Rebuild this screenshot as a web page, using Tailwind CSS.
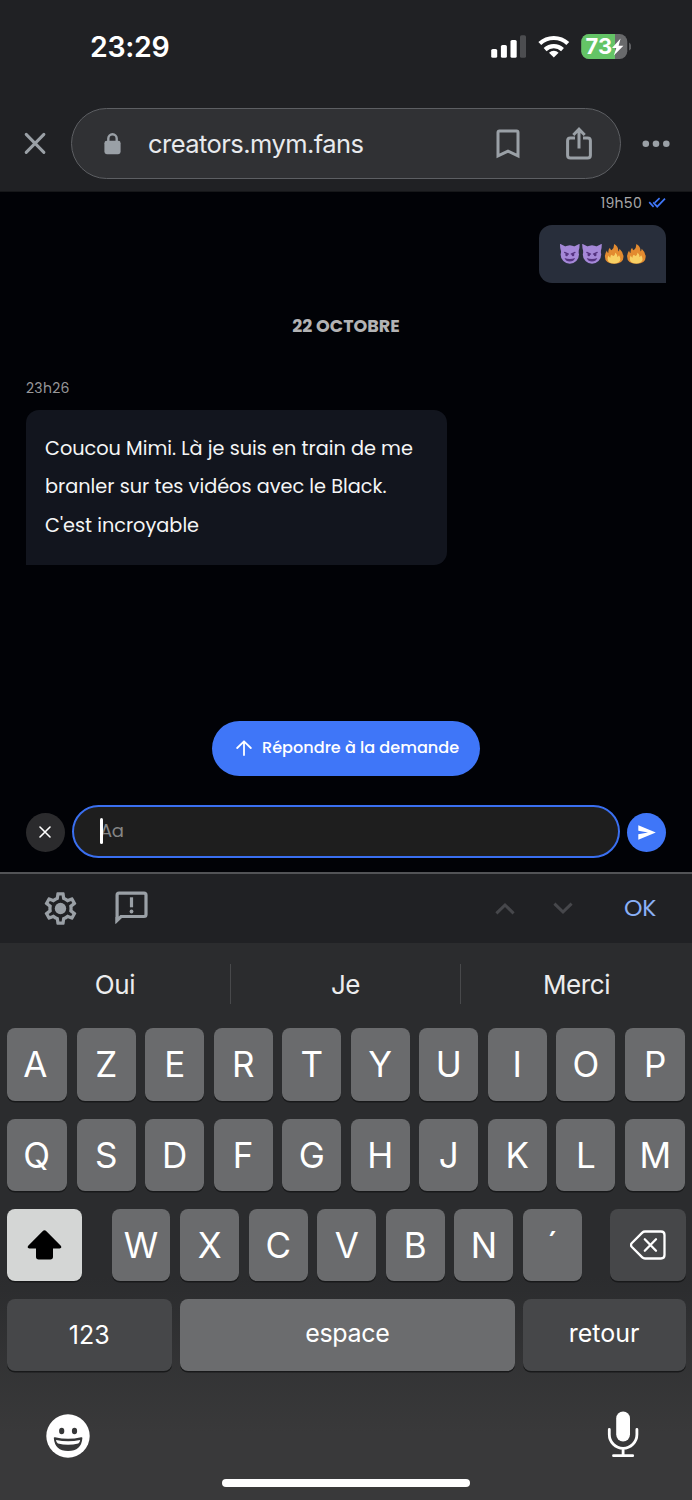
<!DOCTYPE html>
<html lang="fr">
<head>
<meta charset="utf-8">
<title>creators.mym.fans</title>
<script src="https://cdn.jsdelivr.net/npm/@tailwindcss/browser@4"></script>
</head>
<body class="bg-black">
<div class="flex h-[1500px] w-[692px] flex-col overflow-hidden font-['Inter','Liberation_Sans',sans-serif] text-white">

  <!-- Status bar and address bar -->
  <header class="flex h-[192px] shrink-0 flex-col border-b border-[#161719] bg-[#202124]">
    <div class="flex h-[108px] items-start justify-between pr-[61px] pl-[90px]">
      <span class="mt-[27px] text-[28.5px] leading-[40px] font-semibold tracking-[-0.3px]">23:29</span>
      <svg class="mt-[30px] h-[34px] w-[141px]" viewBox="490 30 141 34">
        <g fill="#fff"><rect x="491.2" y="49" width="6" height="8.8" rx="1.6"/><rect x="500.9" y="45" width="6" height="12.8" rx="1.6"/><rect x="510.5" y="40" width="6.2" height="17.8" rx="1.6"/></g>
        <rect x="520" y="35.3" width="6" height="22.5" rx="1.6" fill="#4c4d50"/>
        <g fill="none" stroke="#fff" stroke-width="4.2"><path d="M539.8 43.6a20.3 20.3 0 0 1 28 0"/><path d="M545.1 49.6a12.8 12.8 0 0 1 17.4 0"/></g>
        <path d="M553.8 57.6l-4.8-4.9a7 7 0 0 1 9.6 0z" fill="#fff"/>
        <clipPath id="bat"><rect x="581.3" y="34" width="46" height="25" rx="7.8"/></clipPath>
        <g clip-path="url(#bat)"><rect x="581" y="34" width="47" height="25" fill="#68696b"/><rect x="581" y="34" width="34" height="25" fill="#64c466"/></g>
        <path d="M629 42.6c3.200 1.6 3.200 6.4 0 8z" fill="#5c5d60"/>
        <text x="585.6" y="54.200" font-size="21.500" font-weight="700" fill="#fff" textLength="26.500" lengthAdjust="spacingAndGlyphs">73</text>
        <path d="M620.6 38.600l-8.600 9.300h4.300l-2.500 7.600 9.600-9.800h-4.800z" fill="#fff"/>
      </svg>
    </div>
    <div class="flex items-center">
      <svg class="ml-[23px] h-6 w-6" viewBox="0 0 24 24" fill="none" stroke="#9aa0a6" stroke-width="3" stroke-linecap="round"><path d="M3.2 2.4l17.7 18M20.9 2.4l-17.7 18"/></svg>
      <div class="ml-6 flex h-[71px] w-[550px] items-center rounded-full border-[1.5px] border-[#5d5f63] bg-[#303134]">
        <svg class="ml-[32px] h-[22px] w-[17px]" viewBox="0 0 17 22"><path d="M4.3 9V5.5a4.2 4.2 0 0 1 8.4 0V9" fill="none" stroke="#9aa0a6" stroke-width="2.4"/><rect x=".4" y="7.8" width="16.2" height="13.4" rx="2.4" fill="#9aa0a6"/></svg>
        <span class="ml-[27px] w-[348px] text-[25.5px] leading-[40px] tracking-[-0.55px] text-[#e8eaed]">creators.mym.fans</span>
        <svg class="h-[30px] w-[24px] shrink-0" viewBox="0 0 24 30" fill="none" stroke="#9aa0a6" stroke-width="3"><path d="M2 26.8V3.4Q2 2 3.4 2h17.2Q22 2 22 3.4v23.4l-10-4.6z"/></svg>
        <svg class="ml-[45px] h-[34px] w-[28px] shrink-0" viewBox="0 0 28 34" fill="none" stroke="#9aa0a6" stroke-width="3"><path d="M10 11H5.4Q2.6 11 2.6 13.8v14.4Q2.6 31 5.4 31h17.2q2.8 0 2.8-2.8V13.800q0-2.8-2.8-2.8H18"/><path d="M14 21.4V2.5M8.3 8L14 2.2 19.700 8"/></svg>
      </div>
      <svg class="ml-[21px] h-2 w-7" viewBox="0 0 28 8" fill="#9aa0a6"><circle cx="3.800" cy="3.700" r="3.3"/><circle cx="14" cy="3.700" r="3.3"/><circle cx="24.300" cy="3.700" r="3.3"/></svg>
    </div>
  </header>

  <!-- Conversation -->
  <main class="flex h-[680px] shrink-0 flex-col bg-[#010206] font-['Poppins','Inter',sans-serif]">
    <div class="flex h-[21px] items-center justify-end pr-[26px]">
      <span class="text-[14px] leading-[20px] tracking-[0.3px] text-[#a9a9aa]">19h50</span>
      <svg class="ml-[6px] h-3 w-[18px]" viewBox="0 0 18 12" fill="none" stroke="#3f76f8" stroke-width="1.7"><path d="M1.200 5.200l4.400 4.600M5.200 5.400l4 4.300 7.800-8M6.900 5.600l4.700-4.400"/></svg>
    </div>
    <div class="mt-[12px] mr-[26px] flex h-[58px] w-[127.500px] items-center justify-center self-end rounded-[13px] rounded-br-none bg-[#282e3b]">
      <svg class="ml-px h-[22px] w-[88px]" viewBox="0 0 88 22">
        <defs>
          <g id="imp"><path d="M.4 1.100Q.1.500.9.800l5.500 2.700-4.600 6Q.2 5 .4 1.100zM20 1.100q.3-.6-.5-.3L14 3.500l4.600 6Q20.200 5 20 1.100z" fill="#a588d8"/><circle cx="10.200" cy="11.300" r="9.200" fill="#a588d8"/><path d="M5 9.200l3.800 1.700M15.400 9.200l-3.800 1.700" stroke="#553380" stroke-width="1.200" stroke-linecap="round"/><ellipse cx="7" cy="11.500" rx="1.300" ry="1.600" fill="#553380"/><ellipse cx="13.400" cy="11.500" rx="1.300" ry="1.600" fill="#553380"/><path d="M4.900 14.700q5.300 2.300 10.600 0-1.300 3.600-5.300 3.600t-5.300-3.600z" fill="#553380"/></g>
          <g id="fire"><path d="M10 .7q4.500 2.400 4 7.500 1.200-.6 1.300-2.700 3.700 3.300 4 8 .1 7-9.300 7T.7 13.200q0-3 2-6 .2 2 1.500 2.500-.4-3.500 1.500-5.200.3 1.900 1.600 2.500Q10 4.800 10 .7z" fill="#e38b30"/><path d="M11 9.300q2.500 2 1.900 4.400 1.500-.2 1.900-1.600 3 4.700-.5 7-1.600 1.200-4.300 1.200-6.800 0-6.600-5 .1-1.600 1-2.900.5 1.900 1.800 2.100-.3-2.500 1.500-2.900.4 1 1.400 1.300 2.100-1.200 1.900-3.600z" fill="#f8d064"/></g>
        </defs>
        <use href="#imp" x=".6" y=".2"/><use href="#imp" x="22.800" y=".2"/><use href="#fire" x="45.200" y=".2"/><use href="#fire" x="67.400" y=".2"/>
      </svg>
    </div>
    <div class="mt-[30.500px] text-center text-[17.500px] leading-[24px] font-bold text-[#b3b3b4]">22 OCTOBRE</div>
    <div class="mt-[40px] ml-[26px] text-[14px] leading-[20px] tracking-[0.3px] text-[#98989a]">23h26</div>
    <div class="mt-[12.500px] ml-[26px] h-[154.500px] w-[421px] rounded-[13px] rounded-bl-none bg-[#12151e] pt-[19.500px] pl-[19px] text-[19.300px] leading-[38.500px] whitespace-nowrap text-[#f5f5f6]">
      <p>Coucou Mimi. Là je suis en train de me</p>
      <p>branler sur tes vidéos avec le Black.</p>
      <p>C'est incroyable</p>
    </div>
    <button class="mt-[156.500px] flex h-[55px] w-[268px] items-center self-center rounded-full bg-[#3f76f8] pb-[1px] pl-[24px]">
      <svg class="h-4 w-4" viewBox="0 0 16 16" fill="none" stroke="#fff" stroke-width="1.800" stroke-linecap="round" stroke-linejoin="round"><path d="M8 15V1.500M1.200 8L8 1.300 14.800 8"/></svg>
      <span class="ml-[10px] text-[16.100px] leading-[24px] font-medium whitespace-nowrap">Répondre à la demande</span>
    </button>
    <div class="mt-[29px] flex items-center pl-[25.500px]">
      <div class="mt-px flex size-[39px] items-center justify-center rounded-full bg-[#2b2b2d]">
        <svg class="size-[12px]" viewBox="0 0 12 12" stroke="#fff" stroke-width="1.600" stroke-linecap="round"><path d="M1 1l10 10M11 1L1 11"/></svg>
      </div>
      <div class="ml-[7.500px] flex h-[53px] w-[547.500px] items-center rounded-full border-2 border-[#3a6ff0] bg-[#1e1e1e] pb-px pl-[26px]">
        <span class="z-10 h-[26px] w-[3px] rounded-full bg-white"></span>
        <span class="-ml-[3px] text-[18px] leading-[28px] tracking-[-0.400px] text-[#858585]">Aa</span>
      </div>
      <div class="mt-px ml-[7.500px] flex size-[39px] items-center justify-center rounded-full bg-[#3f76f8]">
        <svg class="h-[15px] w-[18px]" viewBox="0 0 18 15" fill="#fff"><path d="M.3.300L17.800 7.500.3 14.700V9.300l9.700-1.800L.3 5.700z"/></svg>
      </div>
    </div>
  </main>

  <!-- Input accessory bar -->
  <div class="flex h-[71px] shrink-0 items-center border-t-2 border-[#525356] bg-[#202124] pb-px">
    <svg class="ml-[41px] size-[39px]" viewBox="0 0 24 24"><path fill="#9aa0a6" d="M19.430 12.980c.04-.32.07-.64.07-.98 0-.34-.03-.66-.07-.98l2.110-1.650c.19-.15.24-.42.120-.64l-2-3.460c-.09-.16-.26-.25-.44-.25-.06 0-.12.010-.17.030l-2.490 1c-.52-.4-1.080-.73-1.690-.98l-.38-2.650C14.460 2.180 14.250 2 14 2h-4c-.25 0-.46.180-.49.420l-.38 2.650c-.61.250-1.170.590-1.690.980l-2.490-1c-.06-.02-.12-.03-.18-.03-.17 0-.34.090-.43.250l-2 3.460c-.13.220-.07.490.120.640l2.110 1.650c-.04.320-.07.650-.07.980 0 .33.030.66.070.980l-2.110 1.650c-.19.150-.24.420-.12.640l2 3.460c.09.160.26.250.44.250.06 0 .12-.01.17-.03l2.490-1c.52.400 1.080.730 1.690.980l.38 2.650c.03.240.24.420.49.420h4c.25 0 .46-.18.49-.42l.38-2.650c.61-.25 1.170-.59 1.690-.98l2.490 1c.06.020.12.030.18.030.17 0 .34-.09.43-.25l2-3.460c.12-.22.07-.49-.12-.64l-2.110-1.650zm-1.980-1.710c.04.310.05.520.05.730 0 .21-.02.430-.05.730l-.14 1.130.89.700 1.080.840-.7 1.210-1.270-.51-1.040-.42-.9.680c-.43.320-.84.560-1.250.730l-1.060.43-.16 1.130-.2 1.350h-1.400l-.19-1.350-.16-1.130-1.060-.43c-.43-.18-.83-.41-1.230-.71l-.91-.7-1.060.43-1.270.51-.7-1.210 1.080-.84.890-.7-.14-1.130c-.03-.31-.05-.54-.05-.74s.02-.43.05-.73l.14-1.130-.89-.7-1.080-.84.7-1.210 1.270.51 1.040.42.9-.68c.43-.32.840-.56 1.250-.73l1.060-.43.160-1.130.2-1.350h1.390l.19 1.350.160 1.130 1.060.43c.43.180.83.410 1.230.71l.91.700 1.060-.43 1.270-.51.700 1.210-1.070.85-.89.700.140 1.130z"/><circle cx="12" cy="12" r="3.500" fill="#9aa0a6"/></svg>
    <svg class="ml-[35px] h-[34px] w-[33px]" viewBox="0 0 33 34"><path d="M2.100 29.300V4Q2.100 2.100 4 2.100h25q2 0 2 1.900v19.500q0 2-2 2H6z" fill="none" stroke="#9aa0a6" stroke-width="3.200"/><path d="M.5 26v7l6-6z" fill="#9aa0a6"/><path d="M14.900 6.300h3.200v10h-3.200z" fill="#9aa0a6"/><circle cx="16.500" cy="20.500" r="1.900" fill="#9aa0a6"/></svg>
    <svg class="ml-[347px] h-[13px] w-5" viewBox="0 0 20 13" fill="none" stroke="#46474b" stroke-width="3"><path d="M1.400 11.400L10 3l8.600 8.400"/></svg>
    <svg class="ml-[38px] h-[13px] w-5" viewBox="0 0 20 13" fill="none" stroke="#46474b" stroke-width="3"><path d="M1.400 1.600L10 10l8.600-8.400"/></svg>
    <span class="ml-[51px] pb-px font-['Poppins','Inter',sans-serif] text-[23.500px] leading-[30px] tracking-[-0.300px] text-[#8ab0f6]">OK</span>
  </div>

  <!-- Keyboard -->
  <section class="flex h-[557px] shrink-0 flex-col bg-linear-to-b from-[#2b2c2e] from-60% to-[#39393a] to-88%">
    <div class="mb-[3px] grid h-[82px] grid-cols-[230px_231px_231px] items-center text-center text-[26px] leading-[40px] tracking-[-0.400px] text-[#ececed]">
      <span class="pt-[2px]">Oui</span><span class="h-[40px] border-x border-[#48494b] leading-[42px]">Je</span><span class="pt-[2px]">Merci</span>
    </div>
    <div class="grid h-[73px] grid-cols-[60.500px_58.700px_58.700px_58.700px_58.700px_58.700px_58.700px_58.700px_58.700px_60.500px] justify-between px-[6.500px] text-center text-[35px] leading-[73px] *:rounded-[8px] *:bg-[#6a6b6d] *:shadow-[0_1.500px_0_#18191a]">
      <kbd class="pr-[3px] font-[inherit]">A</kbd><kbd class="font-[inherit]">Z</kbd><kbd class="font-[inherit]">E</kbd><kbd class="font-[inherit]">R</kbd><kbd class="font-[inherit]">T</kbd><kbd class="font-[inherit]">Y</kbd><kbd class="font-[inherit]">U</kbd><kbd class="font-[inherit]">I</kbd><kbd class="font-[inherit]">O</kbd><kbd class="font-[inherit]">P</kbd>
    </div>
    <div class="mt-[17.500px] grid h-[72.500px] grid-cols-[60.500px_58.700px_58.700px_58.700px_58.700px_58.700px_58.700px_58.700px_58.700px_60.500px] justify-between px-[6.500px] text-center text-[35px] leading-[72.500px] *:rounded-[8px] *:bg-[#6a6b6d] *:shadow-[0_1.500px_0_#18191a]">
      <kbd class="font-[inherit]">Q</kbd><kbd class="font-[inherit]">S</kbd><kbd class="font-[inherit]">D</kbd><kbd class="font-[inherit]">F</kbd><kbd class="font-[inherit]">G</kbd><kbd class="font-[inherit]">H</kbd><kbd class="font-[inherit]">J</kbd><kbd class="font-[inherit]">K</kbd><kbd class="font-[inherit]">L</kbd><kbd class="font-[inherit]">M</kbd>
    </div>
    <div class="mt-[17.500px] flex h-[72.500px] justify-between px-[6.500px] text-center text-[35px] leading-[72.500px] *:rounded-[8px]">
      <div class="flex w-[75.500px] items-center justify-center bg-[#d4d6d5] shadow-[0_1.500px_0_#18191a]">
        <svg class="h-[30px] w-[35px]" viewBox="0 0 35 30"><path d="M15.600 1.200q1.900-1.700 3.800 0L33.800 15.800q1.500 2.600-1.200 2.700H26v8.300q0 2.700-2.700 2.700H11.700Q9 29.500 9 26.800v-8.300H2.400q-2.700-.1-1.200-2.700z" fill="#000"/></svg>
      </div>
      <div class="ml-[1.500px] grid w-[470px] grid-cols-[repeat(7,58.700px)] justify-between *:rounded-[8px] *:bg-[#6a6b6d] *:shadow-[0_1.500px_0_#18191a]">
        <kbd class="font-[inherit]">W</kbd><kbd class="font-[inherit]">X</kbd><kbd class="font-[inherit]">C</kbd><kbd class="font-[inherit]">V</kbd><kbd class="font-[inherit]">B</kbd><kbd class="font-[inherit]">N</kbd><kbd class="font-[inherit]">´</kbd>
      </div>
      <div class="flex w-[75.500px] items-center justify-center bg-[#464749] shadow-[0_1.500px_0_#18191a]">
        <svg class="h-[30px] w-[36px]" viewBox="0 0 36 30" fill="none" stroke="#fff" stroke-width="2.300" stroke-linecap="round" stroke-linejoin="round"><path d="M15 1.500h16q3.500 0 3.500 3.500v20q0 3.500-3.500 3.500H15q-1.600 0-2.700-1.100L1.900 17q-1.900-2 0-4L12.300 2.600Q13.400 1.500 15 1.500z"/><path d="M14.800 9.300L26 20.700M26 9.300L14.800 20.700"/></svg>
      </div>
    </div>
    <div class="mt-[17.500px] grid h-[72.500px] grid-cols-[165.500px_334.500px_162.700px] justify-between px-[6.500px] text-center text-[25px] leading-[69px] tracking-[-0.300px] *:rounded-[8px] *:shadow-[0_1.500px_0_#18191a]">
      <kbd class="bg-[#464749] pt-[2px] font-[inherit] tracking-[0px]">123</kbd><kbd class="bg-[#6b6c6e] font-[inherit]">espace</kbd><kbd class="bg-[#464749] font-[inherit] tracking-[0px]">retour</kbd>
    </div>
    <div class="mt-[39.500px] flex items-center justify-between pr-[53px] pl-[46px]">
      <svg class="mt-[3px] size-[44px]" viewBox="0 0 44 44"><circle cx="22" cy="22" r="21.700" fill="#fff"/><g fill="#363738"><ellipse cx="15.700" cy="17" rx="2.600" ry="3.200"/><ellipse cx="28.500" cy="17" rx="2.600" ry="3.200"/><path d="M7.800 24q0-1 1.300-.7 13 3 26 0 1.300-.3 1.300.7-1 13-14.300 13T7.800 24z"/></g><path d="M10 25.900q12.100 2.600 24.200 0-.4 3-1.900 3.700-10.200 2.400-20.400 0-1.500-.7-1.900-3.700z" fill="#fff"/></svg>
      <svg class="h-[47px] w-8" viewBox="0 0 32 47"><rect x="9.200" y=".5" width="13.800" height="30" rx="6.900" fill="#fff"/><path d="M2.300 18.500v5a13.800 13.800 0 0 0 27.600 0v-5M16.100 37.500v7M6.500 44.700h19.200" fill="none" stroke="#fff" stroke-width="2.800" stroke-linecap="round"/></svg>
    </div>
    <div class="mt-[21.500px] h-[8px] w-[248px] self-center rounded-full bg-white"></div>
  </section>
</div>
</body>
</html>
